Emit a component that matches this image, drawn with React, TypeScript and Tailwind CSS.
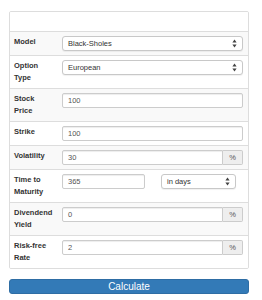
import React from "react";

const Arrows = () => (
  <svg width="5" height="9" viewBox="0 0 5 9" className="shrink-0">
    <path d="M2.5 0.5 L4.6 3.6 L0.4 3.6 Z" fill="#444" />
    <path d="M2.5 8.5 L4.6 5.4 L0.4 5.4 Z" fill="#444" />
  </svg>
);

const Select = ({ value, className = "" }: { value: string; className?: string }) => (
  <div
    className={`h-[15px] flex items-center justify-between bg-white border border-[#c8c8c8] rounded-[3px] pl-[5px] pr-[5px] text-[7.5px] text-[#333] shadow-[0_1px_1px_rgba(0,0,0,0.06)] ${className}`}
  >
    <span>{value}</span>
    <Arrows />
  </div>
);

const Input = ({ value, className = "", addon = false }: { value: string; className?: string; addon?: boolean }) => (
  <div
    className={`h-[15px] flex items-center bg-white border border-[#ccc] pl-[5px] text-[7.5px] text-[#555] shadow-[inset_0_1px_1px_rgba(0,0,0,0.075)] ${
      addon ? "rounded-l-[2px] flex-1" : "rounded-[2px]"
    } ${className}`}
  >
    {value}
  </div>
);

const Row = ({
  label,
  striped,
  children,
}: {
  label: React.ReactNode;
  striped?: boolean;
  children: React.ReactNode;
}) => (
  <div className={`flex border-t border-[#ddd] ${striped ? "bg-[#f9f9f9]" : "bg-white"}`}>
    <div className="w-[48px] px-[4px] py-[4px] text-[7.5px] leading-[12px] font-bold text-[#333]">{label}</div>
    <div className="flex-1 pl-[4px] pr-[5px] py-[4px]">{children}</div>
  </div>
);

const AddonInput = ({ value }: { value: string }) => (
  <div className="flex h-[15px]">
    <Input value={value} addon />
    <div className="w-[20px] h-[15px] flex items-center justify-center bg-[#eee] border border-l-0 border-[#ccc] rounded-r-[2px] text-[7.5px] text-[#555]">
      %
    </div>
  </div>
);

export default function App() {
  return (
    <div className="w-[262px] h-[300px] bg-white pt-[11px] pl-[9px] font-['Liberation_Sans',Arial,sans-serif]">
      <div className="w-[240px] border border-[#ddd] rounded-[2px] overflow-hidden">
        <div className="h-[19px] bg-white" />
        <Row label="Model" striped>
          <Select value="Black-Sholes" />
        </Row>
        <Row label="Option Type">
          <Select value="European" />
        </Row>
        <Row label="Stock Price" striped>
          <Input value="100" />
        </Row>
        <Row label="Strike">
          <Input value="100" />
        </Row>
        <Row label="Volatility" striped>
          <AddonInput value="30" />
        </Row>
        <Row label="Time to Maturity">
          <div className="flex items-start">
            <Input value="365" className="w-[83px]" />
            <Select value="in days" className="w-[75px] ml-[16px]" />
          </div>
        </Row>
        <Row label="Divendend Yield" striped>
          <AddonInput value="0" />
        </Row>
        <Row label="Risk-free Rate">
          <AddonInput value="2" />
        </Row>
      </div>
      <button className="mt-[10px] w-[240px] h-[15px] flex items-center justify-center bg-[#337ab7] border border-[#2e6da4] rounded-[3px] text-white text-[10px] leading-none">
        Calculate
      </button>
    </div>
  );
}
